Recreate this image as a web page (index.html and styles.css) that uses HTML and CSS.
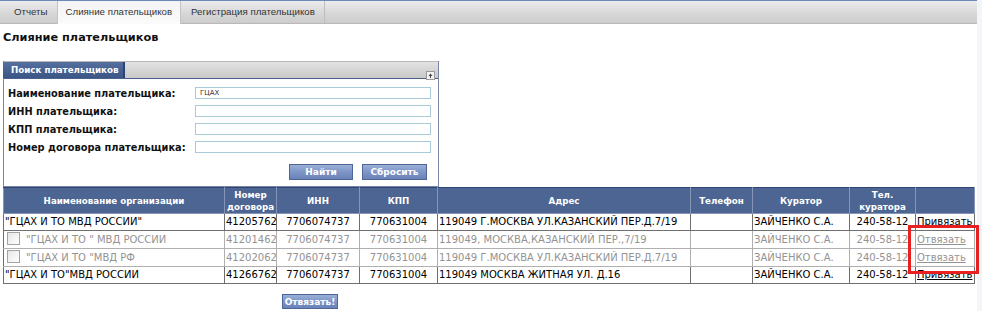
FILE: index.html
```html
<!DOCTYPE html>
<html>
<head>
	<title>Слияние плательщиков</title>
	<meta charset="utf-8" />
	<link rel="stylesheet" href="styles.css">
</head>
<body>
	<div class="page">
		<div class="tabbar">
			<a href="#" class="tab">Отчеты</a>
			<a href="#" class="tab active">Слияние плательщиков</a>
			<a href="#" class="tab">Регистрация плательщиков</a>
		</div>

		<h1>Слияние плательщиков</h1>

		<div class="panel">
			<div class="panel-head">
				<span class="panel-title">Поиск плательщиков</span>
				<span class="panel-toggle">
					<svg width="9" height="9" viewBox="0 0 9 9"><rect x="0.5" y="0.5" width="8" height="8" fill="#f2f2f2" stroke="#9a9a9a"/><path d="M4.5 2.5 L2.5 5 H6.5 Z" fill="#444"/><rect x="4" y="5" width="1" height="2" fill="#444"/></svg>
				</span>
			</div>
			<div class="panel-body">
				<div class="field"><label>Наименование плательщика:</label><input type="text" value="ГЦАХ" /></div>
				<div class="field"><label>ИНН плательщика:</label><input type="text" /></div>
				<div class="field"><label>КПП плательщика:</label><input type="text" /></div>
				<div class="field"><label>Номер договора плательщика:</label><input type="text" /></div>
				<div class="buttons">
					<button class="btn btn-find">Найти</button>
					<button class="btn btn-reset">Сбросить</button>
				</div>
			</div>
		</div>

		<div class="grid-wrap">
			<table class="grid">
				<thead>
					<tr>
						<th class="c-name">Наименование организации</th>
						<th class="c-num">Номер<br />договора</th>
						<th class="c-inn">ИНН</th>
						<th class="c-kpp">КПП</th>
						<th class="c-addr">Адрес</th>
						<th class="c-phone">Телефон</th>
						<th class="c-cur">Куратор</th>
						<th class="c-tel">Тел.<br />куратора</th>
						<th class="c-act"></th>
					</tr>
				</thead>
				<tbody>
					<tr>
						<td>"ГЦАХ И ТО МВД РОССИИ"</td>
						<td>41205762</td>
						<td class="mid">7706074737</td>
						<td class="mid">770631004</td>
						<td>119049 Г.МОСКВА УЛ.КАЗАНСКИЙ ПЕР.Д.7/19</td>
						<td></td>
						<td>ЗАЙЧЕНКО С.А.</td>
						<td class="mid">240-58-12</td>
						<td><a href="#">Привязать</a></td>
					</tr>
					<tr class="linked">
						<td><span class="check"></span>"ГЦАХ И ТО " МВД РОССИИ</td>
						<td>41201462</td>
						<td class="mid">7706074737</td>
						<td class="mid">770631004</td>
						<td>119049, МОСКВА,КАЗАНСКИЙ ПЕР.,7/19</td>
						<td></td>
						<td>ЗАЙЧЕНКО С.А.</td>
						<td class="mid">240-58-12</td>
						<td><a href="#">Отвязать</a></td>
					</tr>
					<tr class="linked">
						<td><span class="check"></span>"ГЦАХ И ТО "МВД РФ</td>
						<td>41202062</td>
						<td class="mid">7706074737</td>
						<td class="mid">770631004</td>
						<td>119049 Г.МОСКВА УЛ.КАЗАНСКИЙ ПЕР.Д.7/19</td>
						<td></td>
						<td>ЗАЙЧЕНКО С.А.</td>
						<td class="mid">240-58-12</td>
						<td><a href="#">Отвязать</a></td>
					</tr>
					<tr>
						<td>"ГЦАХ И ТО"МВД РОССИИ</td>
						<td>41266762</td>
						<td class="mid">7706074737</td>
						<td class="mid">770631004</td>
						<td>119049 МОСКВА ЖИТНАЯ УЛ. Д.16</td>
						<td></td>
						<td>ЗАЙЧЕНКО С.А.</td>
						<td class="mid">240-58-12</td>
						<td><a href="#">Привязать</a></td>
					</tr>
				</tbody>
			</table>
			<div class="highlight"></div>
		</div>

		<div class="unlink-row">
			<button class="btn btn-unlink">Отвязать!</button>
		</div>
	</div>
</body>
</html>
```

FILE: styles.css
```css
body {
	margin: 0;
	background-color: #f3f5f9;
	font-family: "DejaVu Sans", Verdana, sans-serif;
	color: #000;
}

.page {
	width: 977px;
	height: 311px;
	background-color: #fff;
}

.tabbar {
	display: flex;
	height: 22px;
	padding-left: 4px;
	border-top: 1px solid #6e89b9;
	border-bottom: 1px solid #b8b8b8;
	background: linear-gradient(#ececec, #d6d6d6 60%, #cdcdcd);
}

	.tabbar .tab {
		display: block;
		padding: 0 9px 0 10px;
		line-height: 22px;
		font-family: "Liberation Sans", Arial, sans-serif;
		font-size: 9.7px;
		color: #333;
		text-decoration: none;
		border-right: 1px solid #bdbdbd;
	}

	.tabbar .tab.active {
		height: 23px;
		padding: 0 8px;
		background: linear-gradient(#f4f4f4, #fbfbfb);
		border-left: 1px solid #c4c4c4;
		border-right: 1px solid #c4c4c4;
		margin-left: -1px;
	}

h1 {
	margin: 6px 0 0 3px;
	font-size: 11.3px;
	line-height: 16px;
	font-weight: bold;
	color: #111;
}

.panel {
	width: 434px;
	margin: 15px 0 0 3px;
	border: 1px solid #7886a8;
	border-top: none;
	background-color: #fff;
}

.panel-head {
	display: flex;
	height: 16px;
	background: linear-gradient(#e2e2e2, #c9c9c9);
	border-top: 1px solid #b9b9b9;
}

.panel-title {
	width: 122px;
	margin-left: -1px;
	padding-left: 8px;
	box-sizing: border-box;
	background: linear-gradient(#5570a0, #3b5585);
	border-right: 2px solid #2d4470;
	color: #fff;
	font-size: 8.7px;
	font-weight: bold;
	line-height: 16px;
}

.panel-toggle {
	margin-left: auto;
	padding: 3px 3px 0 0;
}

.panel-body {
	padding: 5px 6px 6px 4px;
	border-top: 1px solid #4a628f;
}

.field {
	display: flex;
	align-items: center;
	height: 18px;
}

	.field label {
		width: 187px;
		font-size: 9.8px;
		font-weight: bold;
		color: #111;
	}

	.field input {
		width: 236px;
		height: 12px;
		padding: 0 4px;
		box-sizing: border-box;
		border: 1px solid #a9cad8;
		font-family: "DejaVu Sans", Verdana, sans-serif;
		font-size: 7px;
		color: #333;
	}

.buttons {
	display: flex;
	justify-content: flex-end;
	gap: 9px;
	margin-top: 8px;
	padding-right: 5px;
}

.btn {
	height: 16px;
	padding: 0;
	border: 1px solid #4f6597;
	background: linear-gradient(#9aafd6, #7e95c8 50%, #6a82b8);
	color: #fff;
	font-family: "DejaVu Sans", Verdana, sans-serif;
	font-size: 9px;
	font-weight: bold;
	line-height: 14px;
}

.btn-find {
	width: 64px;
}

.btn-reset {
	width: 65px;
}

.grid-wrap {
	position: relative;
	margin: 0 0 0 3px;
	width: 972px;
}

.grid {
	width: 972px;
	border-collapse: collapse;
	font-size: 10px;
	table-layout: fixed;
}

	.grid th {
		height: 25px;
		padding: 0;
		background-color: #4d6593;
		border: 1px solid #8595b6;
		border-top-color: #2f4470;
		color: #fff;
		font-size: 8.7px;
		font-weight: bold;
		line-height: 12px;
		text-align: center;
	}

	.grid td {
		height: 16px;
		padding: 0 1px;
		border: 1px solid #6f6f6f;
		white-space: nowrap;
		overflow: hidden;
		line-height: 16px;
	}

	.grid td.mid {
		text-align: center;
	}

	.grid a {
		color: #000;
	}

	.grid tr.linked td {
		color: #939393;
		border-color: #b0b0b0;
		border-left-color: #6f6f6f;
		height: 17px;
	}

	.grid tr.linked a {
		color: #939393;
	}

.c-name { width: 220px; }
.c-num { width: 51px; }
.c-inn { width: 82px; }
.c-kpp { width: 77px; }
.c-phone { width: 61px; }
.c-cur { width: 96px; }
.c-tel { width: 65px; }
.c-act { width: 58px; }

.check {
	display: inline-block;
	width: 11px;
	height: 11px;
	margin: 0 6px 0 2px;
	vertical-align: -2px;
	border: 1px solid #a3a3a3;
	background: linear-gradient(135deg, #e6e6e6, #fff);
}

.highlight {
	position: absolute;
	left: 905px;
	top: 38px;
	width: 65px;
	height: 43px;
	border: 3px solid #e8201f;
}

.unlink-row {
	padding: 6px 0 0 282px;
}

.btn-unlink {
	width: 56px;
	height: 15px;
}
```
